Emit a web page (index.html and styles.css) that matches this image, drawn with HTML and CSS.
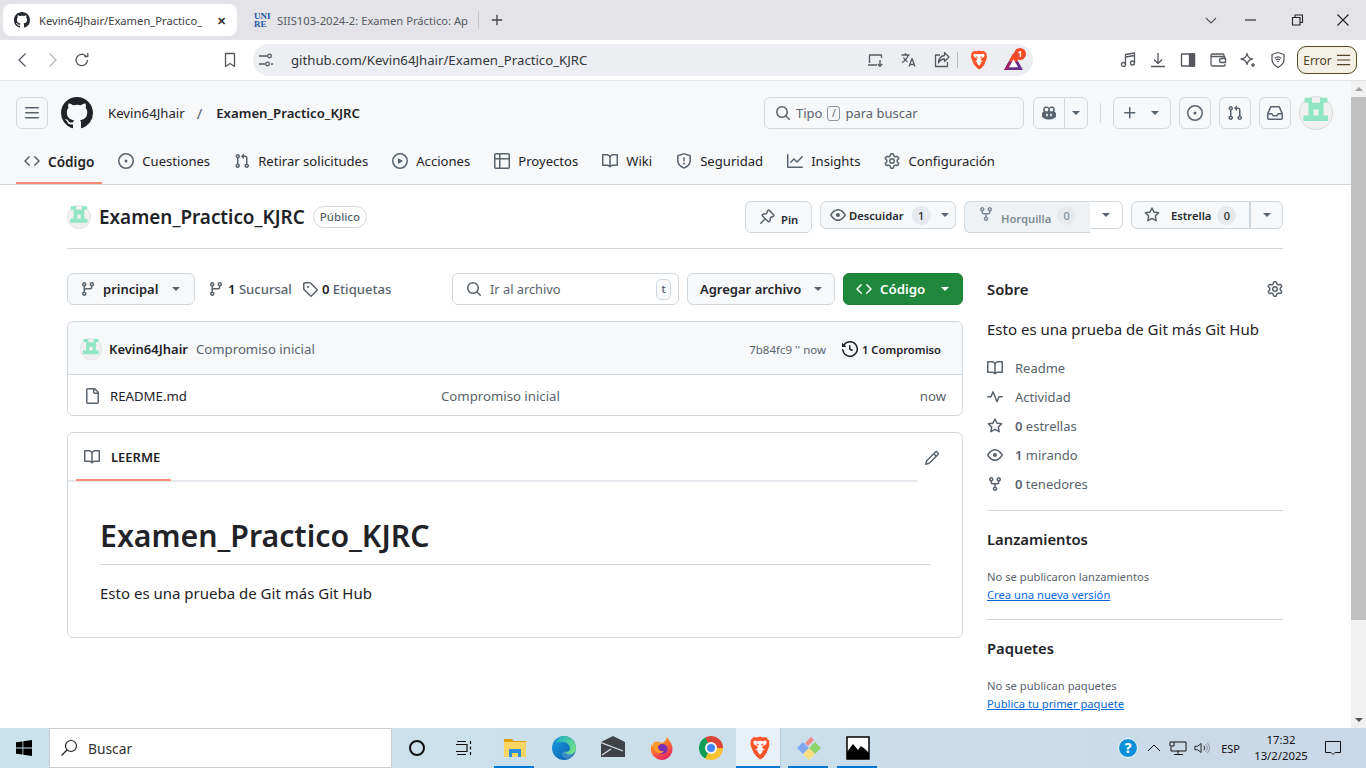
FILE: index.html
```html
<!DOCTYPE html>
<html lang="es">
<head>
<meta charset="utf-8">
<title>Kevin64Jhair/Examen_Practico_KJRC</title>
<link rel="stylesheet" href="styles.css">
</head>
<body>
<svg class="sprite" xmlns="http://www.w3.org/2000/svg">
  <symbol id="i-code" viewBox="0 0 16 16"><path d="m11.28 3.22 4.25 4.25a.75.75 0 0 1 0 1.06l-4.25 4.25a.749.749 0 0 1-1.275-.326.749.749 0 0 1 .215-.734L13.94 8l-3.72-3.72a.749.749 0 0 1 .326-1.275.749.749 0 0 1 .734.215Zm-6.56 0a.751.751 0 0 1 1.042.018.751.751 0 0 1 .018 1.042L2.06 8l3.72 3.72a.749.749 0 0 1-.326 1.275.749.749 0 0 1-.734-.215L.47 8.53a.75.75 0 0 1 0-1.06Z"/></symbol>
  <symbol id="i-issue" viewBox="0 0 16 16"><path d="M8 9.5a1.5 1.5 0 1 0 0-3 1.5 1.5 0 0 0 0 3Z"/><path d="M8 0a8 8 0 1 1 0 16A8 8 0 0 1 8 0ZM1.5 8a6.5 6.5 0 1 0 13 0 6.5 6.5 0 0 0-13 0Z"/></symbol>
  <symbol id="i-pr" viewBox="0 0 16 16"><path d="M1.5 3.25a2.25 2.25 0 1 1 3 2.122v5.256a2.251 2.251 0 1 1-1.5 0V5.372A2.25 2.25 0 0 1 1.5 3.25Zm5.677-.177L9.573.677A.25.25 0 0 1 10 .854V2.5h1A2.5 2.5 0 0 1 13.5 5v5.628a2.251 2.251 0 1 1-1.5 0V5a1 1 0 0 0-1-1h-1v1.646a.25.25 0 0 1-.427.177L7.177 3.427a.25.25 0 0 1 0-.354ZM3.75 2.5a.75.75 0 1 0 0 1.5.75.75 0 0 0 0-1.5Zm0 9.5a.75.75 0 1 0 0 1.5.75.75 0 0 0 0-1.5Zm8.25.75a.75.75 0 1 0 1.5 0 .75.75 0 0 0-1.5 0Z"/></symbol>
  <symbol id="i-play" viewBox="0 0 16 16"><path d="M8 0a8 8 0 1 1 0 16A8 8 0 0 1 8 0ZM1.5 8a6.5 6.5 0 1 0 13 0 6.5 6.5 0 0 0-13 0Zm4.879-2.773 4.264 2.559a.25.25 0 0 1 0 .428l-4.264 2.559A.25.25 0 0 1 6 10.559V5.442a.25.25 0 0 1 .379-.215Z"/></symbol>
  <symbol id="i-table" viewBox="0 0 16 16"><path d="M0 1.75C0 .784.784 0 1.75 0h12.5C15.216 0 16 .784 16 1.75v12.5A1.75 1.75 0 0 1 14.25 16H1.75A1.75 1.75 0 0 1 0 14.25ZM6.5 6.5v8h7.75a.25.25 0 0 0 .25-.25V6.5Zm8-1.5V1.75a.25.25 0 0 0-.25-.25H6.5V5Zm-13 1.5v7.75c0 .138.112.25.25.25H5v-8ZM5 5V1.5H1.75a.25.25 0 0 0-.25.25V5Z"/></symbol>
  <symbol id="i-book" viewBox="0 0 16 16"><path d="M0 1.75A.75.75 0 0 1 .75 1h4.253c1.227 0 2.317.59 3 1.501A3.743 3.743 0 0 1 11.006 1h4.245a.75.75 0 0 1 .75.75v10.5a.75.75 0 0 1-.75.75h-4.507a2.25 2.25 0 0 0-1.591.659l-.622.621a.75.75 0 0 1-1.06 0l-.622-.621A2.25 2.25 0 0 0 5.258 13H.75a.75.75 0 0 1-.75-.75Zm7.251 10.324.004-5.073-.002-2.253A2.25 2.25 0 0 0 5.003 2.5H1.5v9h3.757a3.75 3.75 0 0 1 1.994.574ZM8.755 4.75l-.004 7.322a3.752 3.752 0 0 1 1.992-.572H14.5v-9h-3.495a2.25 2.25 0 0 0-2.25 2.25Z"/></symbol>
  <symbol id="i-shield" viewBox="0 0 16 16"><path d="M7.467.133a1.748 1.748 0 0 1 1.066 0l5.25 1.68A1.75 1.75 0 0 1 15 3.48V7c0 1.566-.32 3.182-1.303 4.682-.983 1.498-2.585 2.813-5.032 3.855a1.697 1.697 0 0 1-1.33 0c-2.447-1.042-4.049-2.357-5.032-3.855C1.32 10.182 1 8.566 1 7V3.48a1.75 1.75 0 0 1 1.217-1.667Zm.61 1.429a.25.25 0 0 0-.153 0l-5.25 1.68a.25.25 0 0 0-.174.238V7c0 1.358.275 2.666 1.057 3.86.784 1.194 2.121 2.34 4.366 3.297a.196.196 0 0 0 .154 0c2.245-.956 3.582-2.104 4.366-3.298C13.225 9.666 13.5 8.36 13.5 7V3.48a.251.251 0 0 0-.174-.237l-5.25-1.68ZM8.75 4.75v3a.75.75 0 0 1-1.5 0v-3a.75.75 0 0 1 1.5 0ZM9 10.5a1 1 0 1 1-2 0 1 1 0 0 1 2 0Z"/></symbol>
  <symbol id="i-graph" viewBox="0 0 16 16"><path d="M1.5 1.75V13.5h13.75a.75.75 0 0 1 0 1.5H.75a.75.75 0 0 1-.75-.75V1.75a.75.75 0 0 1 1.5 0Zm14.28 2.53-5.25 5.25a.75.75 0 0 1-1.06 0L7 7.06 4.28 9.78a.751.751 0 0 1-1.042-.018.751.751 0 0 1-.018-1.042l3.25-3.25a.75.75 0 0 1 1.06 0L10 7.94l4.72-4.72a.751.751 0 0 1 1.042.018.751.751 0 0 1 .018 1.042Z"/></symbol>
  <symbol id="i-gear" viewBox="0 0 16 16"><path d="M8 0a8.2 8.2 0 0 1 .701.031C9.444.095 9.99.645 10.16 1.29l.288 1.107c.018.066.079.158.212.224.231.114.454.243.668.386.123.082.233.09.299.071l1.103-.303c.644-.176 1.392.021 1.82.63.27.385.506.792.704 1.218.315.675.111 1.422-.364 1.891l-.814.806c-.049.048-.098.147-.088.294.016.257.016.515 0 .772-.01.147.038.246.088.294l.814.806c.475.469.679 1.216.364 1.891a7.977 7.977 0 0 1-.704 1.217c-.428.61-1.176.807-1.82.63l-1.102-.302c-.067-.019-.177-.011-.3.071a5.909 5.909 0 0 1-.668.386c-.133.066-.194.158-.211.224l-.29 1.106c-.168.646-.715 1.196-1.458 1.26a8.006 8.006 0 0 1-1.402 0c-.743-.064-1.289-.614-1.458-1.26l-.289-1.106c-.018-.066-.079-.158-.212-.224a5.738 5.738 0 0 1-.668-.386c-.123-.082-.233-.09-.299-.071l-1.103.303c-.644.176-1.392-.021-1.82-.63a8.12 8.12 0 0 1-.704-1.218c-.315-.675-.111-1.422.363-1.891l.815-.806c.05-.048.098-.147.088-.294a6.214 6.214 0 0 1 0-.772c.01-.147-.038-.246-.088-.294l-.815-.806C.635 6.045.431 5.298.746 4.623a7.92 7.92 0 0 1 .704-1.217c.428-.61 1.176-.807 1.82-.63l1.102.302c.067.019.177.011.3-.071.214-.143.437-.272.668-.386.133-.066.194-.158.211-.224l.29-1.106C6.009.645 6.556.095 7.299.03 7.53.01 7.764 0 8 0Zm-.571 1.525c-.036.003-.108.036-.137.146l-.289 1.105c-.147.561-.549.967-.998 1.189-.173.086-.34.183-.5.29-.417.278-.97.423-1.529.27l-1.103-.303c-.109-.03-.175.016-.195.045-.22.312-.412.644-.573.99-.014.031-.021.11.059.19l.815.806c.411.406.562.957.53 1.456a4.709 4.709 0 0 0 0 .582c.032.499-.119 1.05-.53 1.456l-.815.806c-.081.08-.073.159-.059.19.162.346.353.677.573.989.02.03.085.076.195.046l1.102-.303c.56-.153 1.113-.008 1.53.27.161.107.328.204.501.29.447.222.85.629.997 1.189l.289 1.105c.029.109.101.143.137.146a6.6 6.6 0 0 0 1.142 0c.036-.003.108-.036.137-.146l.289-1.105c.147-.561.549-.967.998-1.189.173-.086.34-.183.5-.29.417-.278.97-.423 1.529-.27l1.103.303c.109.029.175-.016.195-.045.22-.313.411-.644.573-.99.014-.031.021-.11-.059-.19l-.815-.806c-.411-.406-.562-.957-.53-1.456a4.709 4.709 0 0 0 0-.582c-.032-.499.119-1.05.53-1.456l.815-.806c.081-.08.073-.159.059-.19a6.464 6.464 0 0 0-.573-.989c-.02-.03-.085-.076-.195-.046l-1.102.303c-.56.153-1.113.008-1.53-.27a4.44 4.44 0 0 0-.501-.29c-.447-.222-.85-.629-.997-1.189l-.289-1.105c-.029-.11-.101-.143-.137-.146a6.6 6.6 0 0 0-1.142 0ZM11 8a3 3 0 1 1-6 0 3 3 0 0 1 6 0ZM9.5 8a1.5 1.5 0 1 0-3.001.001A1.5 1.5 0 0 0 9.5 8Z"/></symbol>
  <symbol id="i-mark" viewBox="0 0 16 16"><path d="M8 0c4.42 0 8 3.58 8 8a8.013 8.013 0 0 1-5.45 7.59c-.4.08-.55-.17-.55-.38 0-.27.01-1.13.01-2.2 0-.75-.25-1.23-.54-1.48 1.78-.2 3.65-.88 3.65-3.95 0-.88-.31-1.59-.82-2.15.08-.2.36-1.02-.08-2.12 0 0-.67-.22-2.2.82-.64-.18-1.32-.27-2-.27-.68 0-1.36.09-2 .27-1.53-1.03-2.2-.82-2.2-.82-.44 1.1-.16 1.92-.08 2.12-.51.56-.82 1.28-.82 2.15 0 3.06 1.86 3.75 3.64 3.95-.23.2-.44.55-.51 1.07-.46.21-1.61.55-2.33-.66-.15-.24-.6-.83-1.23-.82-.67.01-.27.38.01.53.34.19.73.9.82 1.13.16.45.68 1.31 2.69.94 0 .67.01 1.3.01 1.49 0 .21-.15.45-.55.38A7.995 7.995 0 0 1 0 8c0-4.42 3.58-8 8-8Z"/></symbol>
  <symbol id="i-bars" viewBox="0 0 16 16"><path d="M1 2.75A.75.75 0 0 1 1.75 2h12.5a.75.75 0 0 1 0 1.5H1.75A.75.75 0 0 1 1 2.75Zm0 5A.75.75 0 0 1 1.75 7h12.5a.75.75 0 0 1 0 1.5H1.75A.75.75 0 0 1 1 7.75ZM1.75 12h12.5a.75.75 0 0 1 0 1.5H1.75a.75.75 0 0 1 0-1.5Z"/></symbol>
  <symbol id="i-search" viewBox="0 0 16 16"><path d="M10.68 11.74a6 6 0 0 1-7.922-8.982 6 6 0 0 1 8.982 7.922l3.04 3.04a.749.749 0 0 1-.326 1.275.749.749 0 0 1-.734-.215ZM11.5 7a4.499 4.499 0 1 0-8.997 0A4.499 4.499 0 0 0 11.5 7Z"/></symbol>
  <symbol id="i-star" viewBox="0 0 16 16"><path d="M8 .25a.75.75 0 0 1 .673.418l1.882 3.815 4.21.612a.75.75 0 0 1 .416 1.279l-3.046 2.97.719 4.192a.751.751 0 0 1-1.088.791L8 12.347l-3.766 1.98a.75.75 0 0 1-1.088-.79l.72-4.194L.818 6.374a.75.75 0 0 1 .416-1.28l4.21-.611L7.327.668A.75.75 0 0 1 8 .25Zm0 2.445L6.615 5.5a.75.75 0 0 1-.564.41l-3.097.45 2.24 2.184a.75.75 0 0 1 .216.664l-.528 3.084 2.769-1.456a.75.75 0 0 1 .698 0l2.77 1.456-.53-3.084a.75.75 0 0 1 .216-.664l2.24-2.183-3.096-.45a.75.75 0 0 1-.564-.41L8 2.694Z"/></symbol>
  <symbol id="i-eye" viewBox="0 0 16 16"><path d="M8 2c1.981 0 3.671.992 4.933 2.078 1.27 1.091 2.187 2.345 2.637 3.023a1.62 1.62 0 0 1 0 1.798c-.45.678-1.367 1.932-2.637 3.023C11.67 13.008 9.981 14 8 14c-1.981 0-3.671-.992-4.933-2.078C1.797 10.83.88 9.576.43 8.898a1.62 1.62 0 0 1 0-1.798c.45-.677 1.367-1.931 2.637-3.022C4.33 2.992 6.019 2 8 2ZM1.679 7.932a.12.12 0 0 0 0 .136c.411.622 1.241 1.75 2.366 2.717C5.176 11.758 6.527 12.5 8 12.5c1.473 0 2.825-.742 3.955-1.715 1.124-.967 1.954-2.096 2.366-2.717a.12.12 0 0 0 0-.136c-.412-.621-1.242-1.75-2.366-2.717C10.824 4.242 9.473 3.5 8 3.5c-1.473 0-2.825.742-3.955 1.715-1.124.967-1.954 2.096-2.366 2.717ZM8 10a2 2 0 1 1-.001-3.999A2 2 0 0 1 8 10Z"/></symbol>
  <symbol id="i-fork" viewBox="0 0 16 16"><path d="M5 5.372v.878c0 .414.336.75.75.75h4.5a.75.75 0 0 0 .75-.75v-.878a2.25 2.25 0 1 1 1.5 0v.878a2.25 2.25 0 0 1-2.25 2.25h-1.5v2.128a2.251 2.251 0 1 1-1.5 0V8.5h-1.5A2.25 2.25 0 0 1 3.5 6.25v-.878a2.25 2.25 0 1 1 1.5 0ZM5 3.25a.75.75 0 1 0-1.5 0 .75.75 0 0 0 1.5 0Zm6.75.75a.75.75 0 1 0 0-1.5.75.75 0 0 0 0 1.5Zm-3 8.75a.75.75 0 1 0-1.5 0 .75.75 0 0 0 1.5 0Z"/></symbol>
  <symbol id="i-pin" viewBox="0 0 16 16"><path fill="none" stroke="currentColor" stroke-width="1.5" stroke-linecap="round" stroke-linejoin="round" d="M10.3 1.4 14.6 5.7a1 1 0 0 1-.3 1.6l-2.6 1.2-.9 3.5a1 1 0 0 1-1.7.5L3.5 7a1 1 0 0 1 .5-1.7l3.5-.9 1.2-2.7a1 1 0 0 1 1.6-.3ZM6 10l-4.2 4.2"/></symbol>
  <symbol id="i-branch" viewBox="0 0 16 16"><path d="M9.5 3.25a2.25 2.25 0 1 1 3 2.122V6A2.5 2.5 0 0 1 10 8.5H6a1 1 0 0 0-1 1v1.128a2.251 2.251 0 1 1-1.5 0V5.372a2.25 2.25 0 1 1 1.5 0v1.836A2.493 2.493 0 0 1 6 7h4a1 1 0 0 0 1-1v-.628A2.25 2.25 0 0 1 9.5 3.25Zm-6 0a.75.75 0 1 0 1.5 0 .75.75 0 0 0-1.5 0Zm8.25-.75a.75.75 0 1 0 0 1.5.75.75 0 0 0 0-1.5ZM4.25 12a.75.75 0 1 0 0 1.5.75.75 0 0 0 0-1.5Z"/></symbol>
  <symbol id="i-tag" viewBox="0 0 16 16"><path d="M1 7.775V2.75C1 1.784 1.784 1 2.75 1h5.025c.464 0 .91.184 1.238.513l6.25 6.25a1.75 1.75 0 0 1 0 2.474l-5.026 5.026a1.75 1.75 0 0 1-2.474 0l-6.25-6.25A1.75 1.75 0 0 1 1 7.775Zm1.5 0c0 .066.026.13.073.177l6.25 6.25a.25.25 0 0 0 .354 0l5.025-5.025a.25.25 0 0 0 0-.354l-6.25-6.25a.25.25 0 0 0-.177-.073H2.75a.25.25 0 0 0-.25.25ZM6 5a1 1 0 1 1 0 2 1 1 0 0 1 0-2Z"/></symbol>
  <symbol id="i-history" viewBox="0 0 16 16"><path d="m.427 1.927 1.215 1.215a8.002 8.002 0 1 1-1.6 5.685.75.75 0 1 1 1.493-.154 6.5 6.5 0 1 0 1.18-4.458l1.358 1.358A.25.25 0 0 1 3.896 6H.25A.25.25 0 0 1 0 5.75V2.104a.25.25 0 0 1 .427-.177ZM7.75 4a.75.75 0 0 1 .75.75v2.992l2.028.812a.75.75 0 0 1-.557 1.392l-2.5-1A.751.751 0 0 1 7 8.25v-3.5A.75.75 0 0 1 7.75 4Z"/></symbol>
  <symbol id="i-file" viewBox="0 0 16 16"><path d="M2 1.75C2 .784 2.784 0 3.75 0h6.586c.464 0 .909.184 1.237.513l2.914 2.914c.329.328.513.773.513 1.237v9.586A1.75 1.75 0 0 1 13.25 16h-9.5A1.75 1.75 0 0 1 2 14.25Zm1.75-.25a.25.25 0 0 0-.25.25v12.5c0 .138.112.25.25.25h9.5a.25.25 0 0 0 .25-.25V6h-2.75A1.75 1.75 0 0 1 9 4.25V1.5Zm6.75.062V4.25c0 .138.112.25.25.25h2.688l-.011-.013-2.914-2.914-.013-.011Z"/></symbol>
  <symbol id="i-pencil" viewBox="0 0 16 16"><path d="M11.013 1.427a1.75 1.75 0 0 1 2.474 0l1.086 1.086a1.75 1.75 0 0 1 0 2.474l-8.61 8.61c-.21.21-.47.364-.756.445l-3.251.93a.75.75 0 0 1-.927-.928l.929-3.25c.081-.286.235-.547.445-.758l8.61-8.61Zm.176 4.823L9.75 4.81l-6.286 6.287a.253.253 0 0 0-.064.108l-.558 1.953 1.953-.558a.253.253 0 0 0 .108-.064Zm1.238-3.763a.25.25 0 0 0-.354 0L10.811 3.75l1.439 1.44 1.263-1.263a.25.25 0 0 0 0-.354Z"/></symbol>
  <symbol id="i-pulse" viewBox="0 0 16 16"><path d="M6 2c.306 0 .582.187.696.471L10 10.731l1.304-3.26A.751.751 0 0 1 12 7h3.25a.75.75 0 0 1 0 1.5h-2.742l-1.812 4.528a.751.751 0 0 1-1.392 0L6 4.77 4.696 8.03A.75.75 0 0 1 4 8.5H.75a.75.75 0 0 1 0-1.5h2.742l1.812-4.529A.751.751 0 0 1 6 2Z"/></symbol>
  <symbol id="i-plus" viewBox="0 0 16 16"><path d="M7.75 2a.75.75 0 0 1 .75.75V7h4.25a.75.75 0 0 1 0 1.5H8.5v4.25a.75.75 0 0 1-1.5 0V8.5H2.75a.75.75 0 0 1 0-1.5H7V2.75A.75.75 0 0 1 7.75 2Z"/></symbol>
  <symbol id="i-inbox" viewBox="0 0 16 16"><path d="M2.8 2.06A1.75 1.75 0 0 1 4.41 1h7.18c.7 0 1.333.417 1.61 1.06l2.74 6.395c.04.093.06.194.06.295v4.5A1.75 1.75 0 0 1 14.25 15H1.75A1.75 1.75 0 0 1 0 13.25v-4.5c0-.101.02-.202.06-.295Zm1.61.44a.25.25 0 0 0-.23.152L1.887 8H4.75a.75.75 0 0 1 .6.3L6.625 10h2.75l1.275-1.7a.75.75 0 0 1 .6-.3h2.863L11.82 2.652a.25.25 0 0 0-.23-.152Zm10.09 7h-2.875l-1.275 1.7a.75.75 0 0 1-.6.3h-3.5a.75.75 0 0 1-.6-.3L4.375 9.5H1.5v3.75c0 .138.112.25.25.25h12.5a.25.25 0 0 0 .25-.25Z"/></symbol>
  <symbol id="i-copilot" viewBox="0 0 16 16"><path fill-rule="evenodd" d="M4.2 1.6C5.6 1.2 7 1.6 8 2.7c1-1.1 2.4-1.5 3.8-1.1 1.4.4 2 1.7 2 3.2 0 .6-.1 1.1-.3 1.6.5.5 1.5 1.2 1.5 2.2v2.6c0 .5-.3.9-.7 1.2C12.600 13.500 10.400 14.500 8 14.500s-4.600-1-6.300-2.100c-.4-.3-.7-.7-.7-1.200V8.600c0-1 1-1.700 1.500-2.200-.2-.5-.3-1-.3-1.600 0-1.500.6-2.800 2-3.200ZM3.700 4.500c0 1.300.7 2 2 2 1 0 1.500-.8 1.500-2 0-1-.6-1.500-1.700-1.500-1.200 0-1.800.5-1.800 1.500Zm5.100 0c0 1.200.5 2 1.500 2 1.300 0 2-.7 2-2 0-1-.6-1.500-1.800-1.500-1.100 0-1.700.5-1.700 1.500ZM6 8.400c-.4 0-.8.4-.8.8v1.600c0 .4.400.8.800.8s.8-.4.800-.8V9.200c0-.4-.4-.8-.8-.8Zm4 0c-.4 0-.8.4-.8.8v1.600c0 .4.400.8.800.8s.8-.4.800-.8V9.200c0-.4-.4-.8-.8-.8Z"/></symbol>
  <symbol id="i-avatar" viewBox="0 0 34 34"><circle cx="17" cy="17" r="16.500" fill="#f0f0f0" stroke="#d8dcdf"/><path fill-rule="evenodd" fill="#8fe5c4" d="M5.500 1.700h7.500v5h8v-5h7.500v5h-4v12.800h4.500v5.500H4.500v-5.500H9.500V6.700h-4ZM14.500 13.500v6h5v-6Z"/></symbol>
  <symbol id="i-brave" viewBox="0 0 24 24"><path fill="#fb542b" d="M12 0.500l3.200.9 2.600-.5 2.400 2.500 1.300 1.700-.6 1.100.7 1.900-.7 2.900-2.600 6.600-3.100 4.100L12 23.500l-3.200-2.800-3.100-3.600L3 10.500l-.7-2.900.7-1.900-.6-1.100 1.300-1.700L6.200.900l2.600.5Z"/><path fill="#fff" d="M12 13.500l2.700 2.100L12 18.800l-2.700-3.200Zm-5.800-9 3.300.7 2.500-.4 2.500.4 3.300-.7 1 1.700-1 2.200-3 1.500-.7 2 2.500 1.500-4.600 2.300-4.600-2.300 2.500-1.500-.7-2-3-1.500-1-2.200Z"/><path fill="#fb542b" d="m8 7.500 2.400.6.400 1.700-2-.8Zm8 0-2.400.6-.4 1.700 2-.8Z"/></symbol>
</svg>

<div class="tabstrip">
  <div class="tab-active">
    <svg class="fav"><use href="#i-mark"/></svg>
    <span class="tab-title">Kevin64Jhair/Examen_Practico_</span>
    <span class="tab-x">✕</span>
  </div>
  <div class="tab-idle">
    <span class="uni-logo">UNI<br>RE</span>
    <span class="tab-title tab-title-idle">SIIS103-2024-2: Examen Práctico: Ap</span>
  </div>
  <span class="tab-sep"></span>
  <svg class="new-tab" viewBox="0 0 16 16"><path d="M8 2v12M2 8h12"/></svg>
  <div class="win-controls">
    <svg class="win-ico win-chev" viewBox="0 0 16 16"><path d="M3 6l5 5 5-5"/></svg>
    <svg class="win-ico" viewBox="0 0 16 16"><path d="M2 8h11"/></svg>
    <svg class="win-ico" viewBox="0 0 16 16"><path d="M3.500 5.500h7.500v7.500H3.500ZM6 5.500V3h7.500v7.500H11"/></svg>
    <svg class="win-ico" viewBox="0 0 16 16"><path d="M2.500 2.500l11 11M13.500 2.500l-11 11"/></svg>
  </div>
</div>

<div class="toolbar">
  <svg class="tb-ico tb-back" viewBox="0 0 18 18"><path d="M11.500 2.500 5 9l6.500 6.500"/></svg>
  <svg class="tb-ico tb-fwd" viewBox="0 0 18 18"><path d="M6.500 2.500 13 9l-6.500 6.500"/></svg>
  <svg class="tb-ico tb-reload" viewBox="0 0 18 18"><path d="M14.500 9a5.700 5.700 0 1 1-1.700-4.100M14.800 2v3.500h-3.500"/></svg>
  <svg class="tb-ico tb-mark" viewBox="0 0 18 18"><path d="M4.500 2.500h9v13L9 12.500l-4.500 3Z"/></svg>
  <div class="omnibox">
    <svg class="tb-ico tb-site" viewBox="0 0 16 16"><path d="M1 4h8M13 12h2M1 12h6"/><circle cx="11.500" cy="4" r="1.800"/><circle cx="9.500" cy="12" r="1.800"/></svg>
    <span class="url">github.com/Kevin64Jhair/Examen_Practico_KJRC</span>
    <svg class="tb-ico" viewBox="0 0 18 18"><path d="M2.500 12V4h12v3M1 14h9M13 9v6M10.800 13l2.200 2.200 2.200-2.200"/></svg>
    <svg class="tb-ico" viewBox="0 0 18 18"><path d="M1.500 4h8M5.500 2v2M8 4c-.6 3.500-3 6-6 7.500M3.500 6.500c1 2 2.400 3.500 4 4.500M9 15.500l3-8 3 8M10 13.500h4"/></svg>
    <svg class="tb-ico" viewBox="0 0 18 18"><path d="M7 4H2.500v11.500h12V11M11.500 1.500 16 6l-4.500 4.500V8C8 8 6.500 9.500 5.500 12c0-4 2-7 6-7.500Z"/></svg>
    <span class="omni-sep"></span>
    <svg class="brand-ico"><use href="#i-brave"/></svg>
    <span class="bat">
      <svg class="bat-ico" viewBox="0 0 20 18"><path fill="#662d91" d="M10 0 20 18H0Z"/><path fill="#ff4724" d="M10 0 15 9H5Z"/><path fill="#9e1f63" d="M5 9 0 18h4l3-5Z"/><path fill="#fff" d="M10 6.500 14.800 15H5.200Z"/></svg>
      <span class="bat-badge">1</span>
    </span>
  </div>
  <div class="tb-right">
    <svg class="tb-ico" viewBox="0 0 18 18"><path d="M6.500 13.500V3.500l9-1.500v10M6.500 6l9-1.500"/><circle cx="4.500" cy="13.500" r="2"/><circle cx="13.500" cy="12" r="2"/></svg>
    <svg class="tb-ico" viewBox="0 0 18 18"><path d="M9 2v10M5 8.500l4 4 4-4M2 15.500h14"/></svg>
    <svg class="tb-ico" viewBox="0 0 18 18"><path d="M2.500 3h13v12h-13Z"/><path class="tb-fill" d="M10.500 3h5v12h-5Z"/></svg>
    <svg class="tb-ico" viewBox="0 0 18 18"><path d="M15 5V4a1 1 0 0 0-1-1H3.500A1.500 1.500 0 0 0 2 4.500v9A1.500 1.500 0 0 0 3.500 15H15a1 1 0 0 0 1-1v-1M2 5.500h13a1 1 0 0 1 1 1v1M16.500 7.500h-4a1.500 1.500 0 0 0 0 4h4Z"/></svg>
    <svg class="tb-ico" viewBox="0 0 18 18"><path d="M8 2.500c.6 3.400 2 5 5.500 5.500-3.500.6-4.900 2.100-5.500 5.500C7.400 10.100 6 8.600 2 8c4-.5 5.400-2.100 6-5.500ZM14 12v4M12 14h4"/></svg>
    <svg class="tb-ico" viewBox="0 0 18 18"><path d="M9 1.500l6 2v5c0 3.500-2.500 6-6 8-3.500-2-6-4.500-6-8v-5ZM5.800 7.300a4.500 4.500 0 0 1 6.400 0M7 9a2.800 2.800 0 0 1 4 0M8.300 10.700a1 1 0 0 1 1.400 0"/></svg>
    <span class="err-btn">Error<svg class="err-lines" viewBox="0 0 16 12"><path d="M1 1h14M1 6h14M1 11h14"/></svg></span>
  </div>
</div>

<div class="viewport">
  <div class="page">
    <header class="gh-header">
      <div class="gh-top">
        <span class="btn-square"><svg class="ico"><use href="#i-bars"/></svg></span>
        <svg class="gh-logo"><use href="#i-mark"/></svg>
        <span class="crumb">Kevin64Jhair</span>
        <span class="crumb-sep">/</span>
        <span class="crumb-strong">Examen_Practico_KJRC</span>
        <div class="gh-search">
          <svg class="ico"><use href="#i-search"/></svg>
          <span>Tipo</span><span class="slash-key">/</span><span>para buscar</span>
        </div>
        <div class="btn-split">
          <span class="split-main"><svg class="ico"><use href="#i-copilot"/></svg></span>
          <span class="split-caret"><i class="caret"></i></span>
        </div>
        <span class="top-sep"></span>
        <span class="btn-plus"><svg class="ico"><use href="#i-plus"/></svg><i class="caret"></i></span>
        <span class="btn-square"><svg class="ico"><use href="#i-issue"/></svg></span>
        <span class="btn-square"><svg class="ico"><use href="#i-pr"/></svg></span>
        <span class="btn-square"><svg class="ico"><use href="#i-inbox"/></svg></span>
        <svg class="avatar-top"><use href="#i-avatar"/></svg>
      </div>
      <nav class="gh-nav">
        <a class="nav-tab nav-tab-on"><svg class="ico"><use href="#i-code"/></svg>Código</a>
        <a class="nav-tab"><svg class="ico"><use href="#i-issue"/></svg>Cuestiones</a>
        <a class="nav-tab"><svg class="ico"><use href="#i-pr"/></svg>Retirar solicitudes</a>
        <a class="nav-tab"><svg class="ico"><use href="#i-play"/></svg>Acciones</a>
        <a class="nav-tab"><svg class="ico"><use href="#i-table"/></svg>Proyectos</a>
        <a class="nav-tab"><svg class="ico"><use href="#i-book"/></svg>Wiki</a>
        <a class="nav-tab"><svg class="ico"><use href="#i-shield"/></svg>Seguridad</a>
        <a class="nav-tab"><svg class="ico"><use href="#i-graph"/></svg>Insights</a>
        <a class="nav-tab"><svg class="ico"><use href="#i-gear"/></svg>Configuración</a>
      </nav>
    </header>

    <main class="repo">
      <div class="repo-head">
        <svg class="avatar-repo"><use href="#i-avatar"/></svg>
        <h2 class="repo-name">Examen_Practico_KJRC</h2>
        <span class="pill">Público</span>
        <div class="repo-actions">
          <span class="btn btn-pin"><svg class="ico"><use href="#i-pin"/></svg><span class="pin-label">Pin</span></span>
          <span class="btn btn-watch"><svg class="ico"><use href="#i-eye"/></svg>Descuidar<span class="count">1</span><i class="caret"></i></span>
          <div class="btn-group">
            <span class="btn btn-fork"><svg class="ico"><use href="#i-fork"/></svg><span class="fork-label">Horquilla</span><span class="count">0</span></span>
            <span class="btn btn-drop"><i class="caret"></i></span>
          </div>
          <div class="btn-group">
            <span class="btn btn-star"><svg class="ico"><use href="#i-star"/></svg>Estrella<span class="count">0</span></span>
            <span class="btn btn-drop btn-drop-star"><i class="caret"></i></span>
          </div>
        </div>
      </div>

      <div class="repo-body">
        <section class="col-main">
          <div class="file-bar">
            <span class="tool-btn tool-branch"><svg class="ico ico-muted"><use href="#i-branch"/></svg><b>principal</b><i class="caret"></i></span>
            <span class="meta-link meta-first"><svg class="ico ico-muted"><use href="#i-branch"/></svg><span><b>1</b> Sucursal</span></span>
            <span class="meta-link"><svg class="ico ico-muted"><use href="#i-tag"/></svg><span><b>0</b> Etiquetas</span></span>
            <div class="goto">
              <svg class="ico ico-muted"><use href="#i-search"/></svg>
              <span class="goto-text">Ir al archivo</span>
              <kbd class="key">t</kbd>
            </div>
            <span class="tool-btn tool-add"><b>Agregar archivo</b><i class="caret"></i></span>
            <span class="tool-btn tool-green"><svg class="ico"><use href="#i-code"/></svg><b>Código</b><i class="caret"></i></span>
          </div>

          <div class="box files">
            <div class="commit-row">
              <svg class="avatar-commit"><use href="#i-avatar"/></svg>
              <b class="commit-user">Kevin64Jhair</b>
              <span class="commit-msg">Compromiso inicial</span>
              <span class="commit-hash">7b84fc9 '' now</span>
              <svg class="ico ico-dark"><use href="#i-history"/></svg>
              <b class="commit-count">1 Compromiso</b>
            </div>
            <div class="file-row">
              <svg class="ico ico-muted"><use href="#i-file"/></svg>
              <span class="file-name">README.md</span>
              <span class="file-msg">Compromiso inicial</span>
              <span class="file-age">now</span>
            </div>
          </div>

          <div class="box readme">
            <div class="readme-head">
              <div class="readme-tabs">
                <span class="readme-tab"><svg class="ico ico-muted"><use href="#i-book"/></svg>LEERME</span>
              </div>
              <span class="readme-edit"><svg class="ico ico-muted"><use href="#i-pencil"/></svg></span>
            </div>
            <article class="markdown">
              <h1>Examen_Practico_KJRC</h1>
              <p>Esto es una prueba de Git más Git Hub</p>
            </article>
          </div>
        </section>

        <aside class="col-side">
          <div class="side-head"><h3>Sobre</h3><svg class="ico ico-muted"><use href="#i-gear"/></svg></div>
          <p class="side-desc">Esto es una prueba de Git más Git Hub</p>
          <ul class="side-list">
            <li><svg class="ico ico-muted"><use href="#i-book"/></svg>Readme</li>
            <li><svg class="ico ico-muted"><use href="#i-pulse"/></svg>Actividad</li>
            <li><svg class="ico ico-muted"><use href="#i-star"/></svg><span><b>0</b> estrellas</span></li>
            <li><svg class="ico ico-muted"><use href="#i-eye"/></svg><span><b>1</b> mirando</span></li>
            <li><svg class="ico ico-muted"><use href="#i-fork"/></svg><span><b>0</b> tenedores</span></li>
          </ul>
          <div class="side-section">
            <h3>Lanzamientos</h3>
            <p class="side-note">No se publicaron lanzamientos</p>
            <a class="side-link">Crea una nueva versión</a>
          </div>
          <div class="side-section">
            <h3>Paquetes</h3>
            <p class="side-note">No se publican paquetes</p>
            <a class="side-link">Publica tu primer paquete</a>
          </div>
        </aside>
      </div>
    </main>
  </div>
  <div class="scrollbar">
    <span class="sb-btn"><i class="sb-up"></i></span>
    <span class="sb-thumb"></span>
    <span class="sb-track"></span>
    <span class="sb-btn"><i class="sb-down"></i></span>
  </div>
</div>

<footer class="taskbar">
  <svg class="start" viewBox="0 0 16 16"><path d="M0 2.300 6.500 1.400v6.200H0ZM7.300 1.300 16 0v7.600H7.300ZM0 8.400h6.500v6.200L0 13.700ZM7.300 8.400H16V16l-8.700-1.300Z"/></svg>
  <div class="task-search">
    <svg class="task-search-ico" viewBox="0 0 18 18"><circle cx="11" cy="7" r="5.500"/><path d="M7 11 1.500 16.500"/></svg>
    <span>Buscar</span>
  </div>
  <div class="tile"><span class="cortana"></span></div>
  <div class="tile"><svg class="taskview" viewBox="0 0 16 16"><path d="M0 4.500h11v7H0M1 1.500h9M1 14.500h9M14.500 1v3M14.500 6.500v3M14.500 12v3"/></svg></div>
  <div class="tile tile-open">
    <svg class="app" viewBox="0 0 24 24"><path fill="#e3a008" d="M1 3h8l2 2h12v4H1Z"/><path fill="#fcd462" d="M1 6h22v15H1Z"/><path fill="#2a8fd8" d="M6 13h12v8h-3v-4H9v4H6Z"/></svg>
  </div>
  <div class="tile">
    <svg class="app" viewBox="0 0 24 24"><defs><linearGradient id="edge-a" x1="0" y1="0" x2="1" y2="1"><stop offset="0" stop-color="#1a9be0"/><stop offset="1" stop-color="#0a5da8"/></linearGradient><linearGradient id="edge-b" x1="0" y1="0" x2="1" y2="0.600"><stop offset="0" stop-color="#1aa9c8"/><stop offset="1" stop-color="#6fe08a"/></linearGradient></defs><circle cx="12" cy="12" r="12" fill="url(#edge-a)"/><path fill="url(#edge-b)" d="M4 5.500C6 1.500 10 0 12 0c7 0 12 5 12 12 0 4-3 6.500-6 6.500-3 0-5-1.500-5-3 2 .5 5 .3 5-3 0-4-4-6.500-7.500-6.500-3 0-5.500 1-6.500-.5Z"/><path fill="#c9dfec" d="M13 15.500c1 2 4 3 5.500 3 1.500 0 3-.7 4-2-1 3-3 5-5 6-3 .5-7-.5-7.500-4-.3-1.500.8-2.500 3-3Z" opacity=".25"/></svg>
  </div>
  <div class="tile">
    <svg class="app" viewBox="0 0 24 24"><path fill="#3f4347" d="M0 6 12 0l12 6v15H0Z"/><path fill="none" stroke="#d5e2ec" stroke-width="1.200" d="M0 6.500 22 15M1 19l9-6"/></svg>
  </div>
  <div class="tile">
    <svg class="app" viewBox="0 0 24 24"><defs><linearGradient id="fx-a" x1="0" y1="0" x2="0.500" y2="1"><stop offset="0" stop-color="#ffd23f"/><stop offset=".5" stop-color="#ff7a2a"/><stop offset="1" stop-color="#e62b5e"/></linearGradient></defs><path fill="url(#fx-a)" d="M17 0c1 3 3 5 4.500 8 2 5 1 10-3 13.500-4 3.500-10 3-14-.5C1 18 0 13 1.500 8c.5 1 1 1.500 2 2 0-2 1-4 2.500-5 0 1 .5 2 2 2.500C12 8 17 5 17 0Z"/><circle cx="12.500" cy="13" r="5" fill="#7a2fb5"/><path fill="#ff9a2e" d="M3 7c3-2 6-2 9 0-3 0-4 2-4 4 0 3 3 5 6 4-2 3-7 3-9 0-2-2-2-5-2-8Z"/></svg>
  </div>
  <div class="tile"><span class="chrome"><span class="chrome-eye"></span></span></div>
  <div class="tile tile-open tile-active"><svg class="app"><use href="#i-brave"/></svg></div>
  <div class="tile tile-open">
    <svg class="app" viewBox="0 0 24 24"><path fill="#ef8a8a" d="m10 7 6-6 3 3-6 6Z" transform="translate(-2 0)"/><path fill="#7ea9f2" d="M0 12l6-6 6 6-6 6Z"/><path fill="#8fd46b" d="m12 12 6-6 6 6-6 6Z"/><path fill="#f7dd7f" d="m6 18 6-6 6 6-6 6Z"/></svg>
  </div>
  <div class="tile tile-open">
    <svg class="app" viewBox="0 0 24 24"><path fill="#fff" stroke="#000" stroke-width="1.500" d="M1 1h22v22H1Z"/><path d="M1 23v-7l6-8 5 6 3-4 4 3 4 4v6Z"/></svg>
  </div>

  <div class="tray">
    <span class="help">?</span>
    <svg class="tray-ico" viewBox="0 0 16 16"><path d="M2 11l6-6 6 6"/></svg>
    <svg class="tray-ico tray-net" viewBox="0 0 18 16"><path d="M5 2h12v9H2V7M9 11v3M5 14.500h9M1 2h4v4H1Z"/></svg>
    <svg class="tray-ico" viewBox="0 0 18 16"><path d="M1 6v4h3l4 3V3L4 6ZM11 5.500a3.500 3.500 0 0 1 0 5"/><path class="tray-dim" d="M13 3.500a6 6 0 0 1 0 9M15 2a8.500 8.500 0 0 1 0 12"/></svg>
    <span class="tray-lang">ESP</span>
    <span class="clock"><span>17:32</span><span>13/2/2025</span></span>
    <svg class="tray-note" viewBox="0 0 18 16"><path d="M1.500 1.500h15v11h-5.500l-2 2-2-2H1.500Z"/></svg>
  </div>
</footer>
</body>
</html>
```

FILE: styles.css
```css
* { box-sizing: border-box; }
html, body { margin: 0; height: 100%; }
body {
  display: flex; flex-direction: column; height: 768px; overflow: hidden;
  font-family: "Noto Sans", "Open Sans", sans-serif; font-size: 13.2px; color: #1f2328; background: #fff;
}
h1, h2, h3, p, ul { margin: 0; padding: 0; }
ul { list-style: none; }
b { font-weight: 600; }
.sprite { display: none; }
svg { flex: none; }
.ico { width: 16px; height: 16px; fill: currentColor; }
.ico-muted { color: #59636e; }
.ico-dark { color: #1f2328; }
.caret { display: inline-block; width: 0; height: 0; border: 4px solid transparent; border-top-color: currentColor; border-bottom: 0; flex: none; }

/* browser tab strip */
.tabstrip { height: 40px; background: #e3e3e8; display: flex; align-items: center; padding-left: 3px; flex: none; }
.tab-active { width: 234px; height: 32px; background: #fff; border-radius: 8px; display: flex; align-items: center; padding: 0 9px 0 11px; }
.fav { width: 16px; height: 16px; margin-right: 9px; fill: #24292f; }
.tab-title { font-size: 11.2px; white-space: nowrap; color: #3c4043; }
.tab-x { margin-left: auto; font-size: 11px; color: #333; font-weight: 600; padding-right: 2px; }
.tab-idle { width: 241px; display: flex; align-items: center; padding-left: 17px; gap: 6px; }
.uni-logo { font: bold 9px/8px "Liberation Serif", serif; color: #1e56a0; width: 17px; }
.tab-title-idle { color: #555a60; }
.tab-sep { width: 1px; height: 18px; background: #c4c4ca; }
.new-tab { width: 14px; height: 14px; margin-left: 11px; stroke: #444; stroke-width: 1.500; fill: none; }
.win-controls { margin-left: auto; display: flex; align-items: center; gap: 30px; padding-right: 15px; }
.win-ico { width: 16px; height: 16px; fill: none; stroke: #222; stroke-width: 1.100; }
.win-chev { stroke: #555; margin-right: -6px; }

/* browser toolbar */
.toolbar { height: 41px; background: #fff; border-bottom: 1px solid #e3e4e8; display: flex; align-items: center; flex: none; padding-left: 14px; }
.tb-ico { width: 18px; height: 18px; fill: none; stroke: #55585e; stroke-width: 1.300; stroke-linejoin: round; }
.tb-fill { fill: #55585e; }
.tb-fwd { margin-left: 11px; stroke: #b5b7bb; }
.tb-reload { margin-left: 12px; }
.tb-mark { margin-left: 130px; }
.omnibox { width: 780px; height: 32px; margin-left: 14px; border-radius: 16px; background: #edeef2; display: flex; align-items: center; padding: 0 5px 0 5px; gap: 15px; }
.tb-site { width: 16px; height: 16px; margin-left: 0; }
.url { font-size: 13.2px; flex: 1; color: #33363b; margin-left: 2px; white-space: nowrap; }
.omni-sep { width: 1px; height: 16px; background: #b9bbc0; margin: 0 -4px 0 -9px; }
.brand-ico { width: 20px; height: 20px; }
.bat { width: 26px; height: 24px; display: block; position: relative; margin-left: -2px; }
.bat-ico { position: absolute; left: 2px; top: 5px; width: 19px; height: 17px; }
.bat-badge { position: absolute; left: 12px; top: 0; width: 12px; height: 12px; border-radius: 50%; background: #f04a28; color: #fff; font-size: 8px; line-height: 12px; text-align: center; font-weight: 700; }
.tb-right { display: flex; align-items: center; gap: 12px; margin-left: 86px; }
.err-btn { width: 60px; height: 28px; margin-left: -2px; border: 1px solid #5b4a20; border-radius: 9px; background: #f3f0e6; color: #4f4122; font-size: 12px; display: flex; align-items: center; justify-content: center; gap: 4px; }
.err-lines { width: 15px; height: 12px; stroke: #4f4122; stroke-width: 1.300; fill: none; }

/* viewport */
.viewport { flex: 1; display: flex; min-height: 0; }
.page { flex: 1; min-width: 0; overflow: hidden; }
.scrollbar { width: 15px; background: #f1f1f1; display: flex; flex-direction: column; }
.sb-btn { height: 16px; display: flex; align-items: center; justify-content: center; flex: none; }
.sb-thumb { height: 523px; background: #c1c1c1; }
.sb-track { flex: 1; }
.sb-up { border: 4px solid transparent; border-bottom-color: #a3a3a3; border-top: 0; }
.sb-down { border: 4px solid transparent; border-top-color: #505050; border-bottom: 0; }

/* github header */
.gh-header { background: #f6f8fa; border-bottom: 1px solid #d1d9e0; height: 104px; }
.gh-top { display: flex; align-items: center; height: 48px; padding: 16px 18px 0 16px; }
.btn-square { width: 32px; height: 32px; border: 1px solid #d1d9e0; border-radius: 6px; display: flex; align-items: center; justify-content: center; color: #59636e; flex: none; margin-left: 8px; }
.gh-top > .btn-square:first-child { margin-left: 0; }
.gh-logo { width: 32px; height: 32px; margin-left: 13px; fill: #1f2328; }
.crumb { margin-left: 15px; }
.crumb-sep { margin-left: 12px; color: #59636e; font-size: 15px; }
.crumb-strong { margin-left: 14px; font-weight: 600; }
.gh-search { width: 260px; height: 32px; margin-left: auto; border: 1px solid #d1d9e0; border-radius: 6px; display: flex; align-items: center; padding: 0 10px; gap: 5px; color: #59636e; font-size: 13px; }
.slash-key { width: 13px; height: 15px; border: 1px solid #8c959f; border-radius: 3px; font-size: 10px; line-height: 13px; text-align: center; }
.btn-split { width: 55px; height: 32px; margin-left: 9px; border: 1px solid #d1d9e0; border-radius: 6px; display: flex; color: #59636e; }
.split-main { width: 31px; display: flex; align-items: center; justify-content: center; border-right: 1px solid #d1d9e0; }
.split-caret { flex: 1; display: flex; align-items: center; justify-content: center; }
.top-sep { width: 1px; height: 20px; background: #d1d9e0; margin: 0 12px; }
.btn-plus { width: 58px; height: 32px; border: 1px solid #d1d9e0; border-radius: 6px; display: flex; align-items: center; padding-left: 8px; gap: 13px; color: #59636e; }
.avatar-top { width: 34px; height: 34px; margin-left: 8px; }
.gh-nav { display: flex; gap: 8px; padding: 16px 16px 0; height: 56px; }
.nav-tab { height: 39px; padding: 0 8px 5px; border-bottom: 2px solid transparent; display: flex; align-items: center; gap: 8px; color: #1f2328; white-space: nowrap; font-size: 13.1px; }
.nav-tab .ico { color: #59636e; }
.nav-tab-on { border-bottom-color: #fd8c73; font-weight: 600; font-size: 13.6px; }

/* repo */
.repo { padding: 16px 68px 0 67px; }
.repo-head { display: flex; align-items: center; height: 48px; padding-bottom: 16px; border-bottom: 1px solid #d1d9e0; }
.avatar-repo { width: 24px; height: 24px; }
.repo-name { font-size: 18.900px; font-weight: 600; margin-left: 8px; white-space: nowrap; }
.pill { height: 22px; margin-left: 8px; padding: 0 6px; border: 1px solid #d1d9e0; border-radius: 11px; color: #59636e; font-size: 11.500px; font-weight: 500; line-height: 20px; }
.repo-actions { margin-left: auto; display: flex; align-items: flex-start; align-self: flex-start; gap: 8px; }
.btn { display: flex; align-items: center; height: 28px; border: 1px solid #d1d9e0; border-radius: 6px; background: #f6f8fa; font-size: 11.200px; font-weight: 600; color: #25292e; white-space: nowrap; }
.btn .ico { color: #59636e; }
.btn-pin { width: 67px; height: 32px; padding-left: 13px; gap: 6px; }
.pin-label { margin-top: 4px; }
.btn-watch { width: 136px; padding: 0 6px 0 9px; gap: 3px; }
.btn-watch .count { margin-left: 5px; }
.btn-watch .caret { margin-left: auto; color: #59636e; }
.count { min-width: 19px; height: 19px; border-radius: 10px; background: #e6eaef; text-align: center; line-height: 19px; margin-left: 6px; font-size: 11px; font-weight: 500; }
.btn-group { display: flex; align-items: flex-start; }
.btn-fork { width: 126px; height: 32px; border-radius: 6px 0 0 6px; background: #eff2f5; border-right: 0; padding-left: 13px; color: #818b98; }
.btn-fork .ico { color: #818b98; margin-top: -6px; }
.btn-fork .count { color: #818b98; margin-top: -3px; }
.fork-label { margin-left: 7px; margin-top: 3px; }
.btn-drop { width: 33px; border-radius: 0 6px 6px 0; background: #fff; justify-content: center; color: #59636e; border-left: 0; }
.btn-star { width: 119px; border-radius: 6px 0 0 6px; padding-left: 12px; gap: 11px; }
.btn-star .count { margin-left: -5px; }
.btn-drop-star { width: 33px; background: #f6f8fa; border-left: 1px solid #d1d9e0; }
.repo-body { display: flex; gap: 24px; margin-top: 24px; }
.col-main { width: 896px; flex: none; }
.col-side { width: 296px; flex: none; }

/* toolbar above files */
.file-bar { display: flex; align-items: center; height: 32px; }
.tool-btn { height: 32px; border: 1px solid #d1d9e0; border-radius: 6px; background: #f6f8fa; display: flex; align-items: center; font-size: 13px; white-space: nowrap; }
.tool-branch { width: 128px; padding-left: 12px; gap: 7px; }
.tool-branch .caret { margin-left: 7px; color: #59636e; }
.meta-link { display: flex; align-items: center; gap: 4px; margin-left: 10px; color: #59636e; font-size: 13.100px; font-weight: 500; white-space: nowrap; }
.meta-first { margin-left: 13px; }
.meta-link b { color: #1f2328; }
.goto { width: 227px; height: 32px; margin-left: auto; border: 1px solid #d1d9e0; border-radius: 6px; display: flex; align-items: center; padding: 0 7px 0 13px; gap: 8px; color: #59636e; font-size: 12.800px; }
.key { margin-left: auto; width: 15px; height: 21px; border: 1px solid #d1d9e0; border-radius: 5px; font: 500 11px/18px "Noto Sans", sans-serif; text-align: center; background: #f6f8fa; }
.tool-add { width: 148px; margin-left: 8px; padding-left: 12px; gap: 13px; }
.tool-add .caret { color: #59636e; }
.tool-green { width: 120px; margin-left: 8px; padding-left: 12px; gap: 8px; background: #1f883d; border-color: #1a7f37; color: #fff; font-size: 13.300px; }
.tool-green .caret { margin-left: 8px; }

/* boxes */
.box { border: 1px solid #d1d9e0; border-radius: 6px; }
.files { margin-top: 16px; overflow: hidden; }
.commit-row { height: 53px; background: #f6f8fa; border-bottom: 1px solid #d1d9e0; display: flex; align-items: center; padding: 2px 21px 0 12px; }
.avatar-commit { width: 22px; height: 22px; }
.commit-user { margin-left: 7px; font-size: 13px; }
.commit-msg { margin-left: 8px; color: #59636e; }
.commit-hash { margin-left: auto; margin-right: 16px; color: #59636e; font-size: 11.500px; }
.commit-count { margin-left: 4px; font-size: 11.200px; }
.file-row { height: 40px; display: flex; align-items: center; padding: 2px 16px 0; }
.file-name { margin-left: 10px; width: 331px; }
.file-msg { color: #59636e; }
.file-age { margin-left: auto; color: #59636e; }
.readme { margin-top: 16px; }
.readme-head { display: flex; height: 49px; }
.readme-tabs { width: 850px; border-bottom: 2px solid #e4e8ec; padding-left: 8px; display: flex; }
.readme-tab { width: 95px; height: 48px; border-bottom: 2px solid #fd8c73; display: flex; align-items: center; gap: 11px; padding: 2px 0 0 8px; font-size: 13px; font-weight: 600; }
.readme-edit { flex: 1; display: flex; align-items: center; padding-left: 6px; }
.markdown { padding: 31px 32px 32px; }
.markdown h1 { font-size: 30.250px; line-height: 45px; font-weight: 600; padding-bottom: 6px; border-bottom: 1px solid #d1d9e0; margin-bottom: 16px; }
.markdown p { font-size: 15px; line-height: 24px; }

/* sidebar */
.side-head { height: 32px; display: flex; align-items: center; justify-content: space-between; }
.col-side h3 { font-size: 14.800px; font-weight: 600; line-height: 24px; }
.side-desc { margin-top: 12px; font-size: 15px; line-height: 24px; }
.side-list { margin-top: 12px; margin-bottom: 12px; }
.side-list li { height: 29px; display: flex; align-items: center; gap: 12px; color: #59636e; font-size: 13px; }
.side-list b { color: #59636e; font-weight: 600; }
.side-section { border-top: 1px solid #d1d9e0; padding: 16px 0 15px; }
.side-note { margin-top: 17px; font-size: 11.200px; line-height: 18px; color: #59636e; }
.side-link { display: block; font-size: 11.200px; line-height: 18px; color: #0969da; text-decoration: underline; }

/* taskbar */
.taskbar { height: 40px; flex: none; display: flex; align-items: stretch; background: linear-gradient(90deg, #c9e2ec 0%, #cbdfeb 50%, #c9d8e8 100%); }
.start { width: 16px; height: 16px; margin: 12px 17px 0 16px; fill: #000; }
.task-search { width: 343px; border: 1px solid #ccc; background: #fff; display: flex; align-items: center; padding-left: 10px; gap: 10px; font-size: 13.800px; color: #333; }
.task-search-ico { width: 18px; height: 18px; fill: none; stroke: #222; stroke-width: 1.200; }
.tile { width: 49px; display: flex; align-items: center; justify-content: center; flex: none; position: relative; }
.tile-open::after { content: ""; position: absolute; left: 4px; right: 5px; bottom: 0; height: 2px; background: #0078d4; }
.tile-active { width: 45px; margin: 0 3px 0 1px; background: #e8f1f8; padding-left: 3px; border-right: 1px solid #b5cde0; }
.tile-active::after { left: 0; right: 0; }
.app { width: 24px; height: 24px; }
.cortana { width: 16px; height: 16px; border: 2.500px solid #111; border-radius: 50%; }
.taskview { width: 16px; height: 16px; margin-left: -4px; fill: none; stroke: #111; stroke-width: 1.200; }
.chrome { width: 24px; height: 24px; border-radius: 50%; background: conic-gradient(from 330deg, #db4437 0 120deg, #fbc02d 0 240deg, #0f9d58 0); display: flex; align-items: center; justify-content: center; }
.chrome-eye { width: 12px; height: 12px; border-radius: 50%; background: #4285f4; border: 2px solid #fff; }
.tray { margin-left: auto; display: flex; align-items: center; padding-right: 24px; }
.help { width: 20px; height: 20px; border-radius: 50%; background: #0a8fd8; border: 1px solid #fff; color: #fff; font-weight: 800; font-size: 14px; line-height: 18px; text-align: center; margin-right: 8px; }
.tray-ico { width: 16px; height: 16px; fill: none; stroke: #111; stroke-width: 1; margin-right: 7px; }
.tray-net { width: 18px; margin-right: 7px; }
.tray-dim { stroke: #8a9099; }
.tray-lang { font-size: 11px; color: #111; margin-left: 4px; }
.clock { width: 70px; margin-left: 6px; display: flex; flex-direction: column; align-items: center; font-size: 11.300px; line-height: 16px; color: #111; }
.tray-note { width: 18px; height: 16px; margin-left: 8px; fill: none; stroke: #111; stroke-width: 1; }
```
